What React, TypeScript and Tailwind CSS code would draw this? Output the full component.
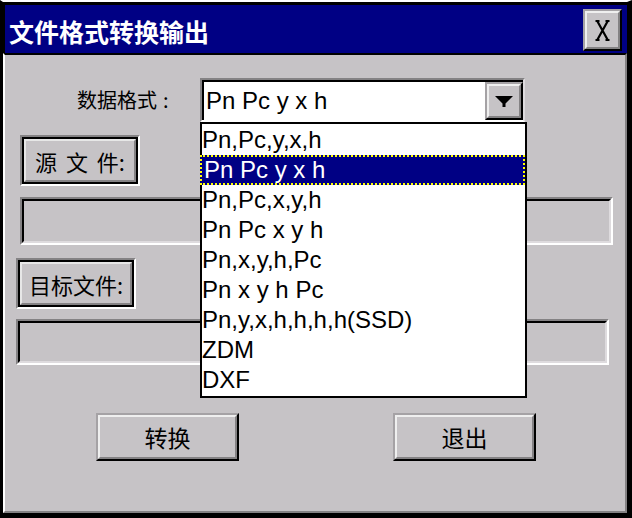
import React from "react";

const items = [
  "Pn,Pc,y,x,h",
  "Pn Pc y x h",
  "Pn,Pc,x,y,h",
  "Pn Pc x y h",
  "Pn,x,y,h,Pc",
  "Pn x y h Pc",
  "Pn,y,x,h,h,h,h(SSD)",
  "ZDM",
  "DXF",
];

function RaisedButton({ className, children }: { className: string; children: React.ReactNode }) {
  return (
    <div className={"border-2 border-t-[#a5a2a5] border-l-[#a5a2a5] border-r-black border-b-black " + className}>
      <div className="w-full h-full border-2 border-t-[#efefef] border-l-[#efefef] border-r-[#848284] border-b-[#848284] bg-[#c6c3c6] flex items-center justify-center">
        {children}
      </div>
    </div>
  );
}

function LabelButton({ className, children }: { className: string; children: React.ReactNode }) {
  return (
    <div className={"w-[120px] h-[51px] border-2 border-t-[#848284] border-l-[#848284] border-r-white border-b-white " + className}>
      <div className="w-full h-full border-2 border-black">
        <div className="w-full h-full border-2 border-t-[#e7e7e7] border-l-[#e7e7e7] border-r-[#848284] border-b-[#848284] bg-[#c6c3c6] flex items-center justify-center font-['Noto_Sans_CJK_SC',sans-serif] text-[22px] leading-none text-black">
          {children}
        </div>
      </div>
    </div>
  );
}

function Field({ className }: { className: string }) {
  return (
    <div className={"border-2 border-t-[#848284] border-l-[#848284] border-r-white border-b-white " + className}>
      <div className="w-full h-full border-2 border-t-black border-l-black border-r-[#dedbde] border-b-[#dedbde] bg-[#c6c3c6]" />
    </div>
  );
}

export default function App() {
  return (
    <div className="w-[632px] h-[518px] flex flex-col bg-[#c6c3c6] border-t-2 border-t-white border-l-[3px] border-l-black border-r-[5px] border-r-black border-b-[5px] border-b-black overflow-hidden">
      {/* Title bar */}
      <div className="h-[51px] shrink-0 flex items-start justify-between bg-[#000084] border-t-[3px] border-t-black border-l-2 border-l-black">
        <div className="h-[48px] pl-[4px] pt-[4px] flex items-center text-white font-bold text-[25px] leading-none font-['Noto_Sans_CJK_SC',sans-serif]">
          文件格式转换输出
        </div>
        <RaisedButton className="w-[39px] h-[42px] mt-[4px] mr-[5px]">
          <svg width="15" height="21" viewBox="0 0 15 21" className="block">
            <path d="M2.5 1.5 L12.5 19.5 M12.5 1.5 L2.5 19.5" stroke="black" strokeWidth="2.2" fill="none" />
            <path d="M0.5 1 H4.5 M10.5 1 H14.5 M0.5 20 H4.5 M10.5 20 H14.5" stroke="black" strokeWidth="2" fill="none" />
          </svg>
        </RaisedButton>
      </div>

      {/* Body */}
      <div className="relative flex-1 flex flex-col border-t-2 border-t-black border-l-2 border-l-white border-r-2 border-r-[#848284] border-b-2 border-b-[#848284]">
        {/* Row 1 */}
        <div className="mt-[23px] flex items-center">
          <div className="w-[195px] pl-[72px] flex items-center font-['Noto_Sans_CJK_SC',sans-serif] text-[20px] leading-none text-black">
            <span>数据格式</span>
            <span className="ml-[6px]">:</span>
          </div>
          <div className="w-[325px] h-[44px] border-2 border-t-[#848284] border-l-[#848284] border-r-[#dedbde] border-b-white">
            <div className="w-full h-full border-t-2 border-l-2 border-black bg-white flex items-center">
              <div className="flex-1 pl-[2px] font-['Liberation_Sans',sans-serif] text-[24px] leading-none text-black whitespace-pre">
                Pn Pc y x h
              </div>
              <RaisedButton className="w-[38px] h-[38px]">
                <svg width="18" height="11" viewBox="0 0 18 11" className="block">
                  <path d="M0 0 H18 L10.5 7.5 V11 H7.5 V7.5 Z" fill="black" />
                </svg>
              </RaisedButton>
            </div>
          </div>
        </div>

        {/* 源文件 */}
        <LabelButton className="mt-[13px] ml-[15px]">
          <span className="[word-spacing:4px] whitespace-pre">源 文 件:</span>
        </LabelButton>
        <Field className="mt-[11px] ml-[15px] w-[593px] h-[48px]" />

        {/* 目标文件 */}
        <LabelButton className="mt-[13px] ml-[11px]">
          <span>目标文件:</span>
        </LabelButton>
        <Field className="mt-[10px] ml-[11px] w-[593px] h-[46px]" />

        {/* Buttons */}
        <div className="mt-[48px] flex">
          <RaisedButton className="ml-[91px] w-[143px] h-[48px]">
            <span className="font-['Noto_Sans_CJK_SC',sans-serif] text-[23px] leading-none text-black">转换</span>
          </RaisedButton>
          <RaisedButton className="ml-[154px] w-[143px] h-[48px]">
            <span className="font-['Noto_Sans_CJK_SC',sans-serif] text-[23px] leading-none text-black">退出</span>
          </RaisedButton>
        </div>

        {/* Dropdown list overlay */}
        <div className="absolute left-[195px] top-[67px] w-[327px] h-[276px] z-10 bg-white border-2 border-black pt-[1px] font-['Liberation_Sans',sans-serif] text-[24px] leading-none">
          {items.map((t, i) =>
            i === 1 ? (
              <div
                key={i}
                className="-ml-[2px] h-[30px] flex items-center pl-[2px] bg-[#000084] text-white border-2 border-dotted border-[#ffff00] whitespace-pre"
              >
                {t}
              </div>
            ) : (
              <div key={i} className="h-[30px] flex items-center text-black whitespace-pre">
                {t}
              </div>
            )
          )}
        </div>
      </div>
    </div>
  );
}
